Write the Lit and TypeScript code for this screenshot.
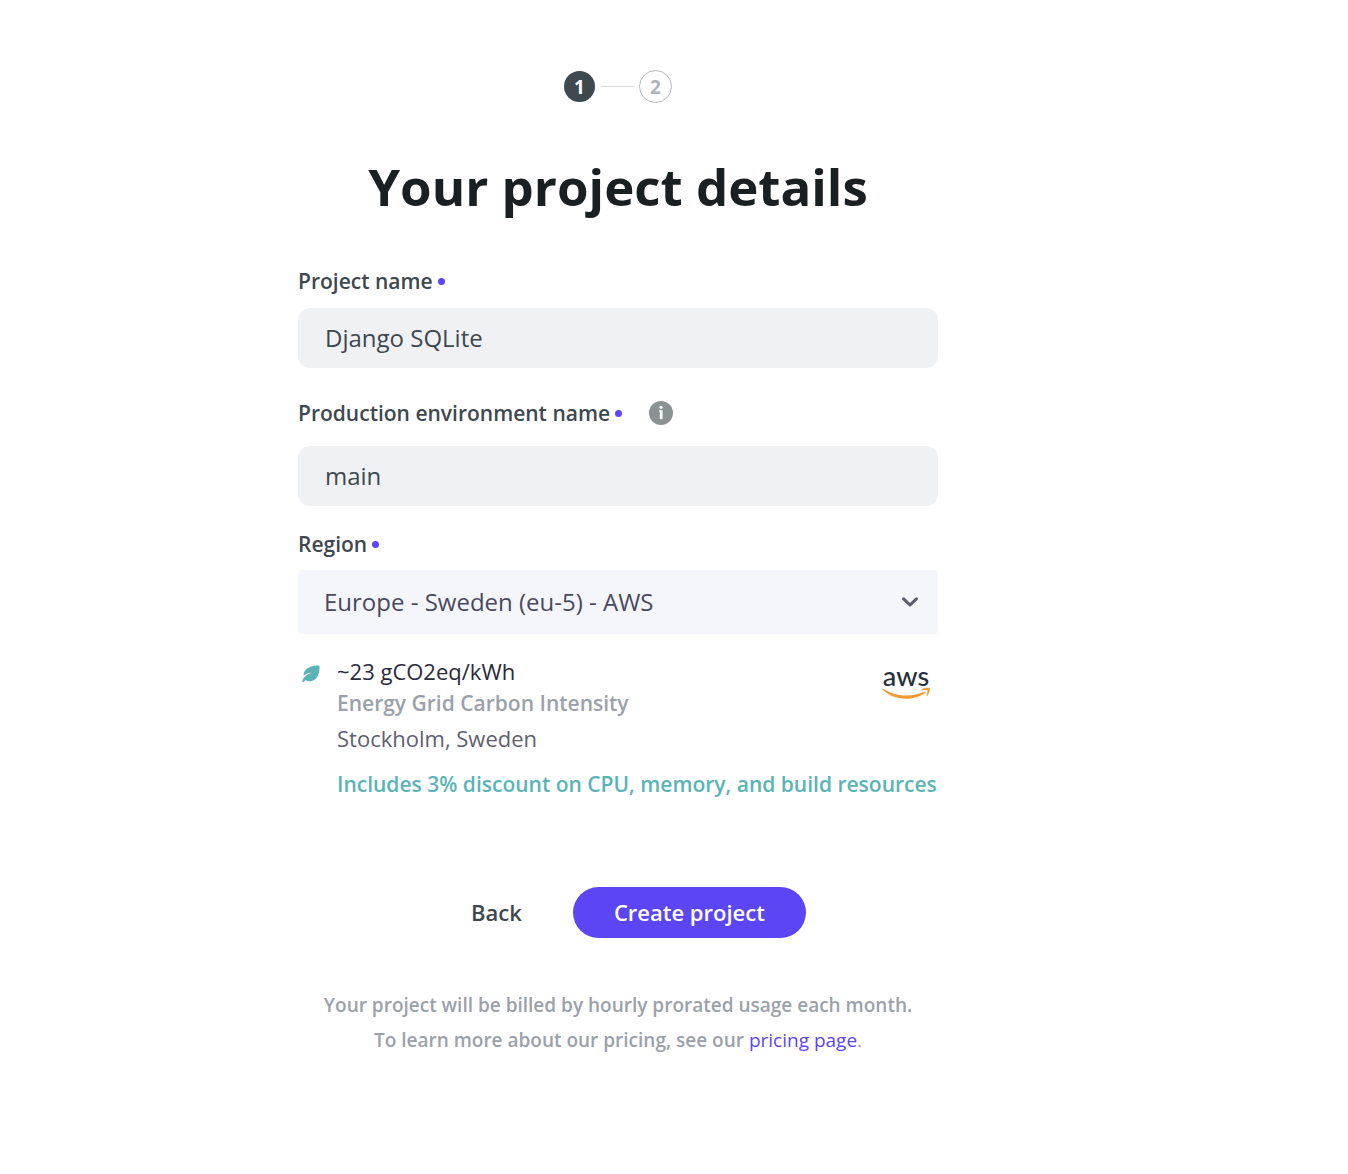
import { LitElement, html, css, svg } from "lit";
import { customElement, property, state } from "lit/decorators.js";

const leafIcon = svg`<svg class="leaf" viewBox="0 0 18 18" aria-hidden="true">
  <path fill="#5ab4b6" d="M17.5.4C14.700 .300 9.500 .600 5.800 3.100 2.600 5.300 1.300 7.800 1.700 11 3.600 8.500 6.600 7.900 9.200 7.700 9.500 7.700 9.600 8 9.300 8.100 5.300 9.200 1.800 11.600.3 15.700-.1 16.800 1.300 17.800 2.200 16.700L3.500 15C6.200 16.400 9.700 17.100 12.900 14.600 16.800 11.600 17.700 5.800 17.500.4Z"/>
</svg>`;

const infoIcon = svg`<svg viewBox="0 0 24 24" aria-hidden="true">
  <circle cx="12" cy="12" r="12" fill="#8a9293"/>
  <circle cx="12" cy="6.300" r="1.600" fill="#fff"/>
  <path d="M10 9.200h3.600v8.100q0 .9-1.400 .9t-1.400-.9v-6.700q-.8-.2-.8-.7z" fill="#fff"/>
</svg>`;

const chevronIcon = svg`<svg class="chevron" viewBox="0 0 16 10" aria-hidden="true">
  <path d="M1.600 1.800 8 8 14.400 1.800" fill="none" stroke="#5c5b6d" stroke-width="3" stroke-linecap="round" stroke-linejoin="round"/>
</svg>`;

const awsLogo = svg`<svg class="aws" viewBox="0 0 50 40" role="img" aria-label="aws">
  <text class="aws-word" x="25" y="24" text-anchor="middle">aws</text>
  <g transform="translate(0 6)" fill="#f29a33">
    <path d="M1.900 20.600C9 25.400 16.500 27.600 25 27.600 31.500 27.600 38.500 26 43.600 23.800 44.500 23.500 45.100 24.300 44.300 24.900 39 28.700 31.500 30.700 24.800 30.700 15.500 30.700 7 27.200 1.400 21.500.9 21 1.300 20.300 1.900 20.600Z"/>
    <path d="M40.300 21.400C42.300 19.900 48 19.300 48.700 20.200 49.400 21.200 48.300 25.800 46 28 45.500 28.400 45.100 28.200 45.300 27.600 46.100 25.800 46.900 23.200 46.500 22.500 46 21.900 42.700 21.900 40.900 22.200 40.200 22.300 40 21.800 40.300 21.400Z"/>
  </g>
</svg>`;

@customElement("step-indicator")
export class StepIndicator extends LitElement {
  @property({ type: Number }) current = 1;

  static styles = css`
    :host { display: block; }
    .steps { display: flex; justify-content: center; align-items: center; gap: 6px; margin: 0; padding: 0; list-style: none; height: 33px; }
    .step { box-sizing: border-box; width: 33px; height: 33px; border: 1px solid #b5b9bb; border-radius: 50%; display: grid; place-items: center; color: #b0b4b7; font-size: 19px; font-weight: 700; line-height: 24px; }
    .active { width: 31px; height: 31px; border: 0; background: #3d484f; color: #fff; }
    .line { width: 32px; height: 1px; background: #d5d8d9; }
  `;

  render() {
    return html`<ol class="steps">
      ${[1, 2].map(
        (n) => html`${n > 1 ? html`<li class="line" role="presentation"></li>` : ""}
          <li class="step ${n === this.current ? "active" : ""}">${n}</li>`
      )}
    </ol>`;
  }
}

@customElement("app-root")
export class AppRoot extends LitElement {
  @state() private name = "Django SQLite";
  @state() private environment = "main";

  static styles = css`
    :host { display: block; background: #fff; font-family: "Open Sans", sans-serif; color: #3d484f; }
    .page { padding: 70px 112px 112px 0; }
    .form { max-width: 640px; margin: 0 auto; }
    .title { margin: 48px 0 46px; text-align: center; font-size: 51px; line-height: 70px; font-weight: 700; color: #1a1f21; }
    .field { margin-bottom: 31px; }
    .field.region { margin-bottom: 22px; }
    .caption { display: flex; align-items: center; height: 28px; margin-bottom: 13px; }
    .production .caption { margin-bottom: 19px; }
    .production { margin-bottom: 24px; }
    .region .caption { margin-bottom: 12px; }
    .label { display: flex; align-items: center; gap: 5px; font-size: 21px; line-height: 28px; font-weight: 600; }
    .required { width: 7px; height: 7px; border-radius: 50%; background: #5c45f5; }
    .info { width: 24px; height: 24px; margin-left: 27px; padding: 0; border: 0; background: none; border-radius: 50%; display: block; }
    .info svg { display: block; width: 24px; height: 24px; }
    .input, .select { box-sizing: border-box; width: 100%; border: 0; outline: 0; font: 400 24px/32px "Open Sans", sans-serif; }
    .input { height: 60px; padding: 0 27px 2px; border-radius: 12px; background: #f0f1f5; color: #3d484f; }
    .select-box { display: grid; align-items: center; }
    .select { grid-area: 1 / 1; appearance: none; height: 64px; padding: 0 48px 0 26px; border-radius: 4px; background: #f5f6fb; color: #4a495e; }
    .chevron { grid-area: 1 / 1; justify-self: end; width: 16px; height: 10px; margin-right: 20px; pointer-events: none; }
    .details { display: grid; grid-template-columns: 18px 1fr auto; column-gap: 17px; padding: 0 7px 0 4px; align-items: start; }
    .leaf { width: 18px; height: 18px; margin-top: 9px; }
    .facts { display: flex; flex-direction: column; }
    .facts p { margin: 0; white-space: nowrap; }
    .intensity { font-size: 22px; line-height: 30px; color: #2b293d; }
    .facts .muted { font-size: 21px; line-height: 34px; font-weight: 600; color: #9aa1ab; }
    .place { font-size: 22px; line-height: 36px; color: #605f70; }
    .discount { grid-column: 2 / -1; min-width: 0; margin: 14px -7px 0 0; font-size: 21px; line-height: 28px; font-weight: 600; color: #5ab4b6; }
    .aws { width: 50px; height: 40px; margin-top: 6px; overflow: visible; }
    .aws-word { font: 500 27px Lato, sans-serif; fill: #252f3e; }
    .actions { display: flex; justify-content: center; gap: 10px; margin-top: 89px; }
    .button { height: 51px; padding: 0 41px 2px; border: 0; border-radius: 26px; background: none; color: inherit; font: 600 22px/30px "Open Sans", sans-serif; cursor: pointer; }
    .primary { background: #5c45f5; color: #fff; }
    .note { margin: 50px 0 0; text-align: center; font-size: 19px; line-height: 35px; font-weight: 600; color: #9aa1ab; }
    .link, .link-end { font-weight: 400; }
    .link { color: #5c45f5; text-decoration: none; }
  `;

  render() {
    return html`<main class="page">
      <form class="form" @submit=${(e: Event) => e.preventDefault()}>
        <step-indicator .current=${1}></step-indicator>
        <h1 class="title">Your project details</h1>

        <div class="field">
          <div class="caption"><label class="label" for="name">Project name<span class="required"></span></label></div>
          <input class="input" id="name" type="text" required .value=${this.name}
            @input=${(e: Event) => (this.name = (e.target as HTMLInputElement).value)} />
        </div>

        <div class="field production">
          <div class="caption">
            <label class="label" for="environment">Production environment name<span class="required"></span></label>
            <button class="info" type="button" aria-label="About the production environment name">${infoIcon}</button>
          </div>
          <input class="input" id="environment" type="text" required .value=${this.environment}
            @input=${(e: Event) => (this.environment = (e.target as HTMLInputElement).value)} />
        </div>

        <div class="field region">
          <div class="caption"><label class="label" for="region">Region<span class="required"></span></label></div>
          <div class="select-box">
            <select class="select" id="region" required><option>Europe - Sweden (eu-5) - AWS</option></select>
            ${chevronIcon}
          </div>
        </div>

        <section class="details">
          ${leafIcon}
          <div class="facts">
            <p class="intensity">~23 gCO2eq/kWh</p>
            <p class="muted">Energy Grid Carbon Intensity</p>
            <p class="place">Stockholm, Sweden</p>
          </div>
          ${awsLogo}
          <p class="discount">Includes 3% discount on CPU, memory, and build resources</p>
        </section>

        <div class="actions">
          <button class="button" type="button">Back</button>
          <button class="button primary" type="submit">Create project</button>
        </div>

        <p class="note">
          Your project will be billed by hourly prorated usage each month.<br />
          To learn more about our pricing, see our <a class="link" href="#pricing">pricing page</a><span class="link-end">.</span>
        </p>
      </form>
    </main>`;
  }
}
